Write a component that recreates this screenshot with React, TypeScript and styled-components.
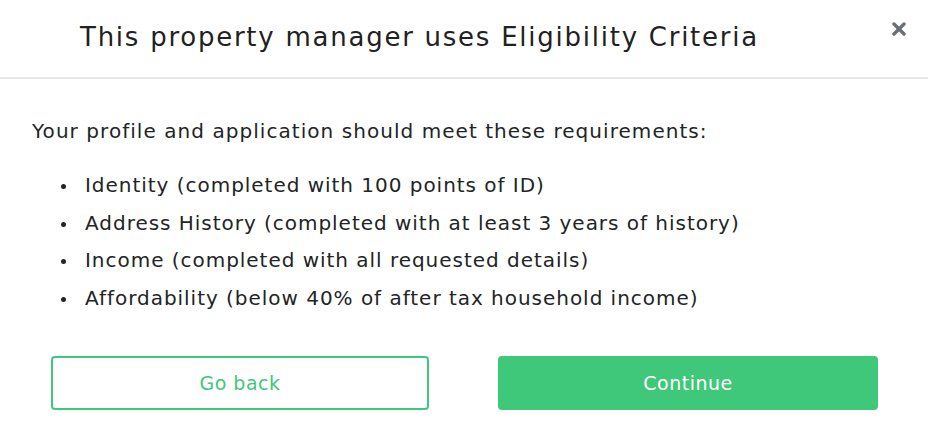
import React from 'react';
import styled, { createGlobalStyle } from 'styled-components';

const GlobalStyle = createGlobalStyle`
  html, body {
    margin: 0;
    padding: 0;
    background: #ffffff;
  }
  body {
    font-family: "DejaVu Sans", "Open Sans", sans-serif;
    color: #222526;
  }
`;

const Modal = styled.div`
  width: 928px;
  height: 442px;
  background: #fff;
  display: flex;
  flex-direction: column;
`;

const Header = styled.div`
  height: 77px;
  border-bottom: 2px solid #e6e6e6;
  display: flex;
  align-items: center;
  justify-content: space-between;
  padding: 0 22px 0 80px;
`;

const Title = styled.h2`
  margin: 0;
  font-size: 26px;
  font-weight: normal;
  letter-spacing: 1.75px;
  color: #1f2223;
  margin-top: -4px;
`;

const CloseButton = styled.button`
  border: none;
  background: none;
  padding: 0;
  align-self: flex-start;
  margin-top: 22px;
  cursor: pointer;
  display: flex;
`;

const Body = styled.div`
  padding: 38px 32px 0;
`;

const Intro = styled.p`
  margin: 0 0 26px;
  font-size: 20px;
  line-height: 28px;
  letter-spacing: 1.05px;
`;

const List = styled.ul`
  margin: 0;
  padding: 0 0 0 53px;
  list-style: none;
  display: flex;
  flex-direction: column;
  gap: 9.5px;
`;

const Item = styled.li`
  position: relative;
  font-size: 20px;
  line-height: 28px;
  letter-spacing: 0.97px;
  &::before {
    content: '';
    position: absolute;
    left: -24px;
    top: 13px;
    width: 5px;
    height: 5px;
    border-radius: 50%;
    background: #222526;
  }
`;

const Actions = styled.div`
  display: grid;
  grid-template-columns: 378px 380px;
  column-gap: 69px;
  padding: 44px 50px 0 51px;
`;

const ActionButton = styled.button<{ $primary?: boolean }>`
  height: 54px;
  border-radius: 4px;
  font-family: inherit;
  font-size: 19px;
  letter-spacing: 0.5px;
  cursor: pointer;
  border: 2px solid #40c87a;
  background: ${(p) => (p.$primary ? '#40c87a' : '#fff')};
  color: ${(p) => (p.$primary ? '#fff' : '#40c87a')};
`;

const requirements = [
  'Identity (completed with 100 points of ID)',
  'Address History (completed with at least 3 years of history)',
  'Income (completed with all requested details)',
  'Affordability (below 40% of after tax household income)',
];

export default function App() {
  return (
    <>
      <GlobalStyle />
      <Modal>
        <Header>
          <Title>This property manager uses Eligibility Criteria</Title>
          <CloseButton aria-label="Close">
            <svg width="14" height="14" viewBox="0 0 14 14">
              <path d="M2 2 L12 12 M12 2 L2 12" stroke="#6b6f73" strokeWidth="3.4" strokeLinecap="round" />
            </svg>
          </CloseButton>
        </Header>
        <Body>
          <Intro>Your profile and application should meet these requirements:</Intro>
          <List>
            {requirements.map((r) => (
              <Item key={r}>{r}</Item>
            ))}
          </List>
        </Body>
        <Actions>
          <ActionButton>Go back</ActionButton>
          <ActionButton $primary>Continue</ActionButton>
        </Actions>
      </Modal>
    </>
  );
}
